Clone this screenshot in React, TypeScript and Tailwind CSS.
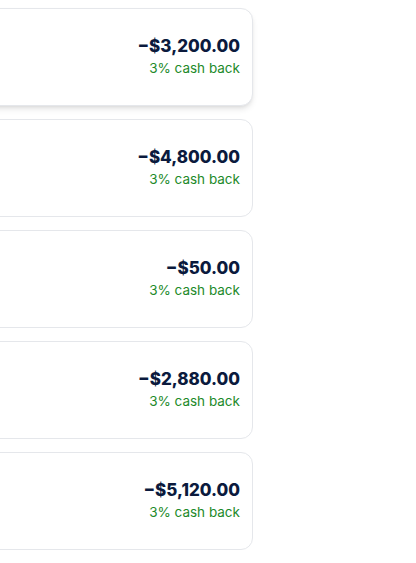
const rows = [
  { amount: "−$3,200.00", cashback: "3% cash back" },
  { amount: "−$4,800.00", cashback: "3% cash back" },
  { amount: "−$50.00", cashback: "3% cash back" },
  { amount: "−$2,880.00", cashback: "3% cash back" },
  { amount: "−$5,120.00", cashback: "3% cash back" },
];

export default function App() {
  return (
    <div className="min-h-[563px] w-[416px] bg-white pt-2 overflow-hidden" style={{ fontFamily: "Inter, 'Noto Sans', sans-serif" }}>
      <div className="-ml-[40px] w-[293px] flex flex-col gap-[13px]">
        {rows.map((row, idx) => (
          <div
            key={idx}
            className={`h-[98px] bg-white border border-[#e5e7eb] rounded-xl flex items-center justify-end pr-3 pb-[2px] ${
              idx === 0 ? "shadow-md" : ""
            }`}
          >
            <div className="text-right">
              <div className="text-[17px] leading-6 font-extrabold text-[#0b1a3d]">{row.amount}</div>
              <div className="text-[13.5px] leading-5 text-[#1d8a2a]">{row.cashback}</div>
            </div>
          </div>
        ))}
      </div>
    </div>
  );
}
